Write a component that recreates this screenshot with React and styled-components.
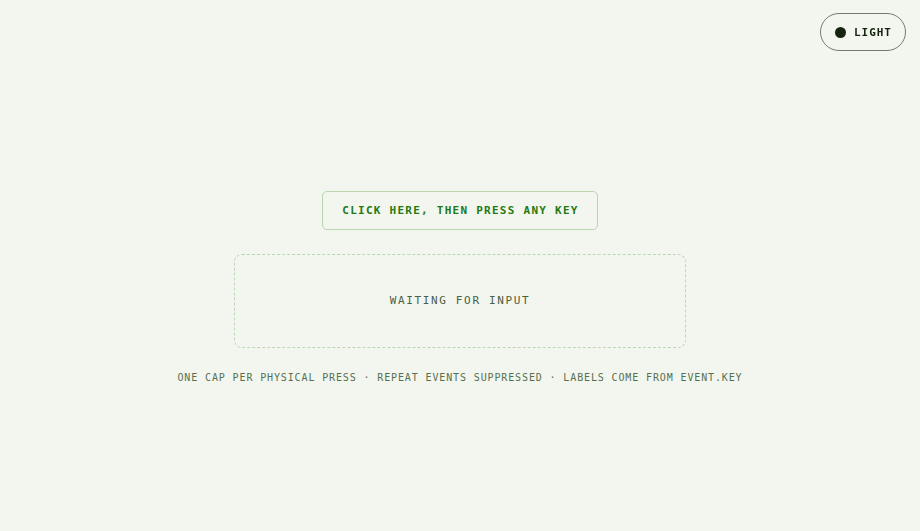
import styled, { createGlobalStyle } from "styled-components";

const GlobalStyle = createGlobalStyle`
  * {
    box-sizing: border-box;
  }

  body {
    margin: 0;
    background-color: #f3f6ef;
    font-family: "DejaVu Sans Mono", "Liberation Mono", monospace;
  }
`;

const Page = styled.main`
  min-height: 100vh;
  padding-top: 42px;
  display: flex;
  flex-direction: column;
  align-items: center;
  justify-content: center;
  gap: 24px;
`;

const ThemeToggle = styled.button`
  position: fixed;
  top: 13px;
  right: 14px;
  height: 38px;
  padding: 0 13px 0 14px;
  display: flex;
  align-items: center;
  gap: 8px;
  background: transparent;
  border: 1px solid #6f7d6b;
  border-radius: 999px;
  color: #16240f;
  font-family: inherit;
  font-size: 11px;
  font-weight: bold;
  letter-spacing: 0.09em;
  cursor: pointer;
`;

const Dot = styled.span`
  width: 11px;
  height: 11px;
  border-radius: 50%;
  background-color: #16240f;
`;

const CaptureButton = styled.button`
  height: 39px;
  padding: 0 18px 0 19px;
  background: transparent;
  border: 1px solid #bad5af;
  border-radius: 5px;
  color: #237a14;
  font-family: inherit;
  font-size: 11px;
  font-weight: bold;
  letter-spacing: 0.114em;
  cursor: pointer;
`;

const Display = styled.div`
  width: 452px;
  height: 94px;
  display: flex;
  align-items: center;
  justify-content: center;
  border: 1px dashed #bcd6b2;
  border-radius: 8px;
  color: #4a6045;
  font-size: 11px;
  letter-spacing: 0.15em;
`;

const Footnote = styled.p`
  margin: 0;
  color: #56704f;
  font-size: 10px;
  letter-spacing: 0.087em;
`;

const App = () => {
  return (
    <>
      <GlobalStyle />
      <ThemeToggle>
        <Dot />
        LIGHT
      </ThemeToggle>
      <Page>
        <CaptureButton>CLICK HERE, THEN PRESS ANY KEY</CaptureButton>
        <Display>WAITING FOR INPUT</Display>
        <Footnote>
          ONE CAP PER PHYSICAL PRESS · REPEAT EVENTS SUPPRESSED · LABELS COME FROM EVENT.KEY
        </Footnote>
      </Page>
    </>
  );
};

export default App;
